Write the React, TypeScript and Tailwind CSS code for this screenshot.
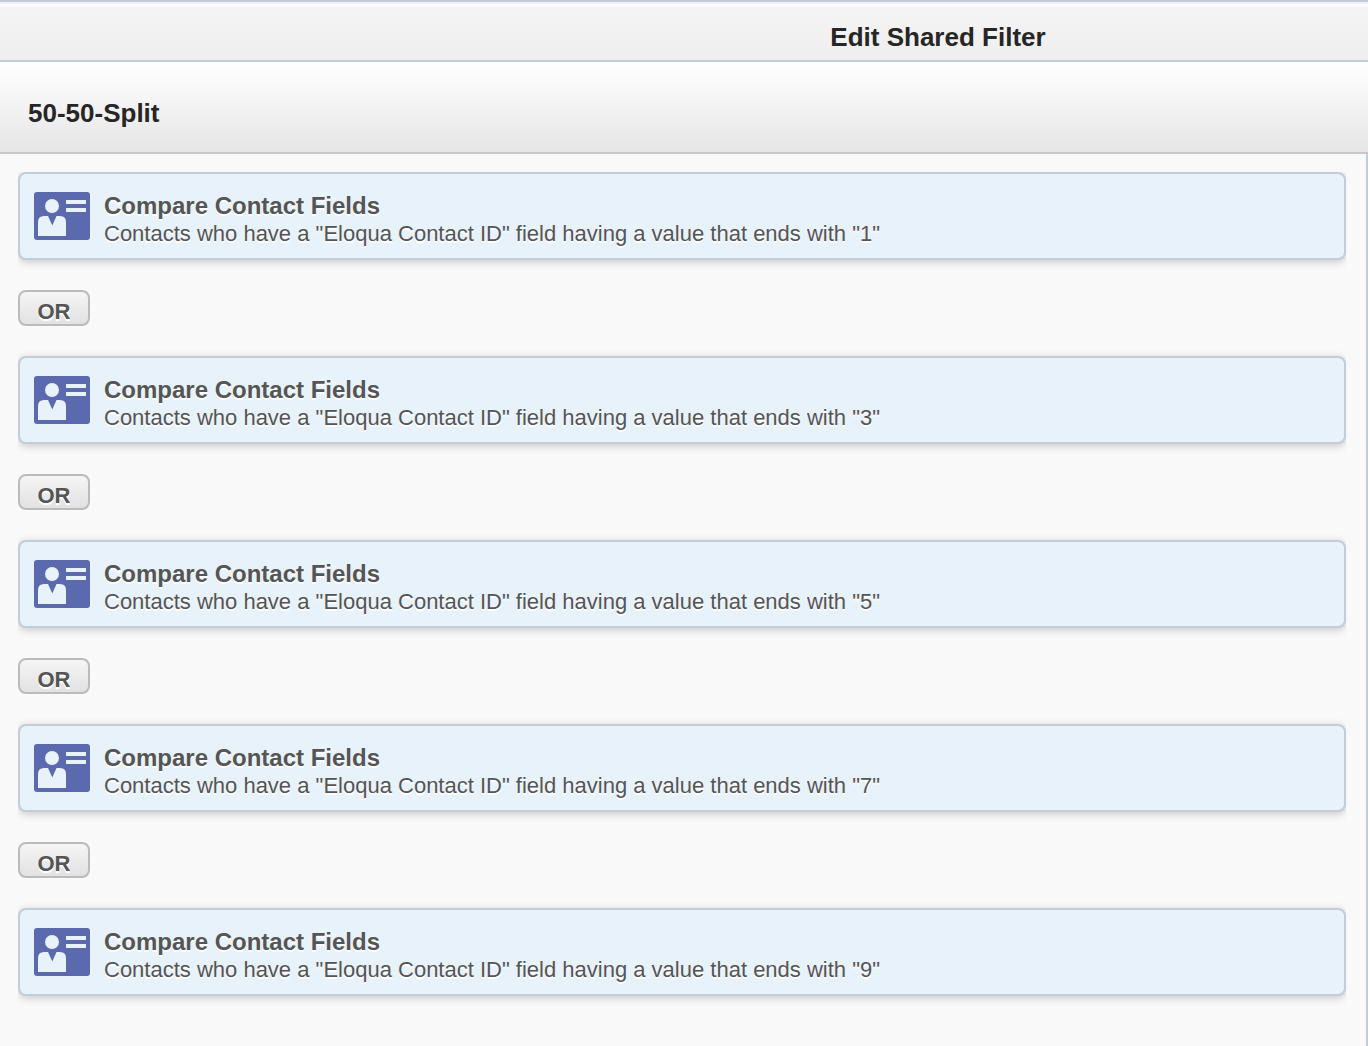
import { Fragment } from "react"

const filters = [
  { field: "Eloqua Contact ID", value: "1" },
  { field: "Eloqua Contact ID", value: "3" },
  { field: "Eloqua Contact ID", value: "5" },
  { field: "Eloqua Contact ID", value: "7" },
  { field: "Eloqua Contact ID", value: "9" },
]

function ContactCardIcon() {
  return (
    <svg viewBox="0 0 56 48" className="h-12 w-14 shrink-0" aria-hidden="true">
      <rect width="56" height="48" rx="3" fill="#5b69ae" />
      <g fill="#e8f2fb">
        <circle cx="18" cy="14" r="7" />
        <path d="M4 44V30Q4 24 10 24H14L18.300 33.500L22.500 24H26Q32 24 32 30V44Z" />
        <rect x="32" y="8" width="20" height="4" />
        <rect x="32" y="16" width="20" height="4" />
      </g>
    </svg>
  )
}

export default function App() {
  return (
    <div className="flex min-h-screen flex-col bg-[#f9f9f9] font-['Liberation_Sans',Arial,sans-serif]">
      {/* Title bar */}
      <header className="border-y-2 border-[#c2cdd8] bg-[#f0f0f0] pt-0.5">
        <div className="border-t-2 border-white bg-linear-to-b from-[#f5f5f5] to-[#eeeeee] pt-[14px] pb-1.5 pl-[508px] text-center">
          <h1 className="text-[26px] leading-[34px] font-bold text-[#262626]">
            Edit Shared Filter
          </h1>
        </div>
      </header>

      {/* Filter name */}
      <div className="border-b-2 border-[#c8c8c8] bg-linear-to-b from-white to-[#e6e6e6] px-7 pt-[34px] pb-[22px]">
        <h2 className="text-[26px] leading-[34px] font-bold text-[#262626]">
          50-50-Split
        </h2>
      </div>

      {/* Criteria */}
      <main className="grow border-r-2 border-[#c2cdd8] pt-[18px] pr-5 pb-8 pl-[18px]">
        <div className="flex flex-col items-start gap-[30px] overflow-hidden pb-4 text-[#555555] text-shadow-[0_2px_0_#ffffff]">
          {filters.map((item, index) => (
            <Fragment key={item.value}>
              {index > 0 && (
                <button
                  type="button"
                  className="h-9 w-[72px] rounded-lg border-2 border-[#bbbbbb] bg-linear-to-b from-[#f5f5f5] to-[#e2e2e2] pt-1.5 text-[22px] leading-7 font-bold text-shadow-[0_2px_0_#ffffff]"
                >
                  OR
                </button>
              )}

              <section className="flex w-full items-start gap-[14px] rounded-lg border-2 border-[#c2cdd8] bg-[#e8f2fb] px-[14px] pt-[18px] pb-[10px] shadow-[0_2px_8px_rgba(0,0,0,0.2)]">
                <ContactCardIcon />
                <div>
                  <h3 className="text-2xl leading-7 font-bold">
                    Compare Contact Fields
                  </h3>
                  <p className="text-[22px] leading-7">
                    Contacts who have a "{item.field}" field having a value that
                    ends with "{item.value}"
                  </p>
                </div>
              </section>
            </Fragment>
          ))}
        </div>
      </main>
    </div>
  )
}
